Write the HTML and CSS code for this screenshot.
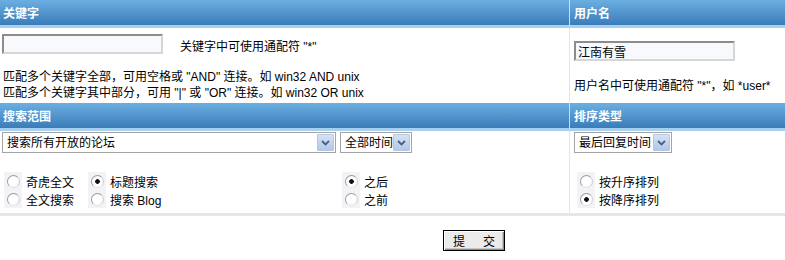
FILE: index.html
```html
<!DOCTYPE html>
<html lang="zh-CN">

<head>
    <meta charset="UTF-8">
    <meta name="viewport" content="width=device-width, initial-scale=1.0">
    <title>搜索</title>

    <link rel="stylesheet" href="styles.css">
</head>

<body>
    <form class="wrap">
        <table class="search">
            <tr>
                <th class="main">关键字</th>
                <th class="side">用户名</th>
            </tr>
            <tr class="row-kw">
                <td class="main">
                    <div class="kw-line">
                        <input class="text" type="text" name="srchtxt">
                        <span>关键字中可使用通配符 "*"</span>
                    </div>
                    <p class="note">
                        匹配多个关键字全部，可用空格或 "AND" 连接。如 win32 AND unix<br>
                        匹配多个关键字其中部分，可用 "|" 或 "OR" 连接。如 win32 OR unix
                    </p>
                </td>
                <td class="side">
                    <input class="text user" type="text" name="srchuname" value="江南有雪">
                    <p class="note user-note">用户名中可使用通配符 "*"，如 *user*</p>
                </td>
            </tr>
            <tr>
                <th class="main">搜索范围</th>
                <th class="side">排序类型</th>
            </tr>
            <tr class="row-range">
                <td class="main">
                    <div class="selects">
                        <label class="select w-forum">
                            <select name="srchfid">
                                <option>搜索所有开放的论坛</option>
                            </select>
                            <span class="arrow"><svg width="9" height="6" viewBox="0 0 9 6"><path d="M1 1 L4.5 4.5 L8 1" fill="none" stroke="#4a5f86" stroke-width="1.8"/></svg></span>
                        </label>
                        <label class="select w-time">
                            <select name="srchfrom">
                                <option>全部时间</option>
                            </select>
                            <span class="arrow"><svg width="9" height="6" viewBox="0 0 9 6"><path d="M1 1 L4.5 4.5 L8 1" fill="none" stroke="#4a5f86" stroke-width="1.8"/></svg></span>
                        </label>
                    </div>
                    <div class="opts range">
                        <label class="opt"><span class="rbox"><input type="radio" name="srchtype"></span>奇虎全文</label>
                        <label class="opt"><span class="rbox"><input type="radio" name="srchtype" checked></span>标题搜索</label>
                        <label class="opt"><span class="rbox"><input type="radio" name="before" checked></span>之后</label>
                        <label class="opt"><span class="rbox"><input type="radio" name="srchtype"></span>全文搜索</label>
                        <label class="opt"><span class="rbox"><input type="radio" name="srchtype"></span>搜索 Blog</label>
                        <label class="opt"><span class="rbox"><input type="radio" name="before"></span>之前</label>
                    </div>
                </td>
                <td class="side">
                    <div class="selects">
                        <label class="select w-order">
                            <select name="orderby">
                                <option>最后回复时间</option>
                            </select>
                            <span class="arrow"><svg width="9" height="6" viewBox="0 0 9 6"><path d="M1 1 L4.5 4.5 L8 1" fill="none" stroke="#4a5f86" stroke-width="1.8"/></svg></span>
                        </label>
                    </div>
                    <div class="opts order">
                        <label class="opt"><span class="rbox"><input type="radio" name="ascdesc"></span>按升序排列</label>
                        <label class="opt"><span class="rbox"><input type="radio" name="ascdesc" checked></span>按降序排列</label>
                    </div>
                </td>
            </tr>
        </table>

        <div class="actions">
            <button type="button" class="btn">提　交</button>
        </div>
    </form>
</body>

</html>
```

FILE: styles.css
```css
/* page */
html {
    overflow: hidden;
}

body {
    margin: 0;
    font: 12px "Liberation Sans", "Noto Sans CJK SC", sans-serif;
    color: #000;
    background: #fff;
}

.wrap {
    width: 948px;
    margin: 0;
}

/* table */
.search {
    width: 100%;
    border-collapse: separate;
    border-spacing: 0;
}

.search th {
    height: 25px;
    padding: 0 0 0 3px;
    text-align: left;
    vertical-align: middle;
    color: #fff;
    font-weight: bold;
    background: linear-gradient(#6bafe2, #3b7cb8);
    border-bottom: 3px solid #a7cfef;
}

.search td {
    padding: 0 0 0 0;
    vertical-align: top;
}

.search .main {
    width: 566px;
}

.search th.side {
    border-left: 1px solid #c9def0;
    padding-left: 4px;
}

.search td.side {
    border-left: 1px solid #dfe6ee;
    padding-left: 4px;
}

.row-kw td {
    height: 75px;
}

.row-range td {
    height: 82px;
    border-bottom: 3px solid #e3e7eb;
}

/* keyword row */
.kw-line {
    display: flex;
    align-items: center;
    gap: 17px;
    padding: 6px 0 0 2px;
}

.kw-line span {
    padding-top: 3px;
}

.text {
    box-sizing: border-box;
    width: 161px;
    height: 20px;
    margin: 0;
    padding: 0 2px;
    border: 2px solid;
    border-color: #8c8c8c #d6d6d6 #d6d6d6 #8c8c8c;
    background: #f7f9fd;
    font: inherit;
    color: #000;
}

.text.user {
    margin-top: 13px;
    display: block;
}

.note {
    margin: 15px 0 0 3px;
    line-height: 16px;
}

.user-note {
    margin: 17px 0 0 0;
}

/* selects */
.selects {
    display: flex;
    gap: 4px;
    padding: 1px 0 0 2px;
}

.side .selects {
    padding-left: 0;
}

.select {
    box-sizing: border-box;
    display: flex;
    align-items: center;
    height: 21px;
    border: 1px solid #a4a4a4;
    background: #fff;
}

.select select {
    flex: 1;
    min-width: 0;
    height: 100%;
    padding: 0 0 0 4px;
    border: 0;
    outline: 0;
    background: transparent;
    font: inherit;
    color: #000;
    appearance: none;
    -webkit-appearance: none;
}

.arrow {
    box-sizing: border-box;
    width: 17px;
    height: 17px;
    margin-right: 1px;
    display: flex;
    align-items: center;
    justify-content: center;
    border: 1px solid #b4c6e4;
    border-radius: 1px;
    background: linear-gradient(#d6e2f4, #b3c7e7);
}

.w-forum {
    width: 334px;
}

.w-time {
    width: 72px;
}

.w-order {
    width: 98px;
}

/* radios */
.opts {
    display: grid;
    grid-auto-rows: 18px;
    margin-top: 19px;
}

.opts.range {
    grid-template-columns: 84px 254px auto;
    margin-left: 4px;
}

.opts.order {
    grid-template-columns: auto;
    margin-left: 3px;
}

.opt {
    display: flex;
    align-items: center;
    gap: 4px;
}

.rbox {
    width: 18px;
    height: 18px;
    display: flex;
    align-items: center;
    justify-content: center;
    background: #f3f3f7;
}

.rbox input {
    appearance: none;
    -webkit-appearance: none;
    box-sizing: border-box;
    width: 13px;
    height: 13px;
    margin: 0;
    border-radius: 50%;
    border: 1px solid;
    border-color: #9c9c9c #cfcfcf #e2e2e2 #9c9c9c;
    background: radial-gradient(circle at 40% 40%, #fff 50%, #ececec);
}

.rbox input:checked {
    background: radial-gradient(circle, #111 0 2px, #fff 2.6px);
}

/* submit */
.actions {
    padding-top: 14px;
    text-align: center;
}

.btn {
    box-sizing: border-box;
    width: 62px;
    height: 21px;
    padding: 0 0 0 3px;
    border: 1px solid #000;
    background: #ebebeb;
    box-shadow: inset 1px 1px #fff, inset -1px -1px #8a8a8a, inset -2px -2px #c6c6c6;
    font: inherit;
    color: #000;
    letter-spacing: 3px;
}
```
